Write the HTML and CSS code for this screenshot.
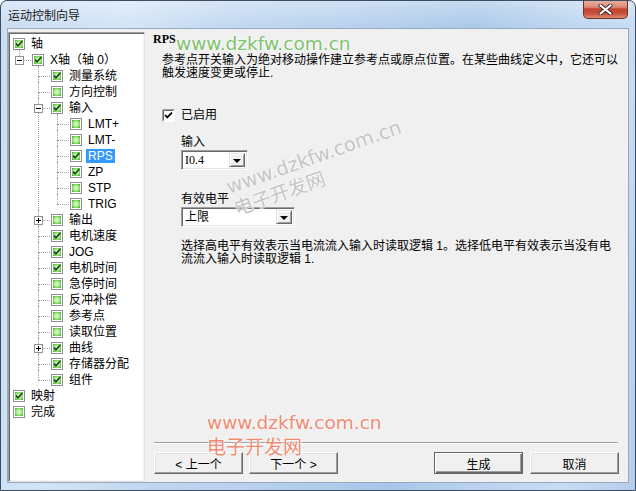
FILE: index.html
```html
<!DOCTYPE html>
<html lang="zh">
<head>
<meta charset="utf-8">
<title>运动控制向导</title>
<link rel="stylesheet" href="styles.css">
</head>
<body>
<div class="window">
  <div class="titlebar">
    <div class="title">运动控制向导</div>
    <div class="close">
      <svg width="15" height="11" viewBox="0 0 15 11"><path d="M2.5 1.5 L12.5 9.5 M12.5 1.5 L2.5 9.5" stroke="#3a2a2a" stroke-width="4" stroke-linecap="round"/><path d="M2.5 1.5 L12.5 9.5 M12.5 1.5 L2.5 9.5" stroke="#fff" stroke-width="2.2" stroke-linecap="round"/></svg>
    </div>
  </div>
  <div class="client">
    <div class="tree">
      <ul class="tv root">
        <li>
          <div class="row"><svg class="cb"><use href="#on"/></svg><span class="lbl">轴</span></div>
          <ul class="tv">
            <li class="last">
              <div class="row"><svg class="exp"><use href="#minus"/></svg><svg class="cb"><use href="#on"/></svg><span class="lbl">X轴（轴 0）</span></div>
              <ul class="tv">
                <li><div class="row"><svg class="cb"><use href="#on"/></svg><span class="lbl">测量系统</span></div></li>
                <li><div class="row"><svg class="cb"><use href="#off"/></svg><span class="lbl">方向控制</span></div></li>
                <li>
                  <div class="row"><svg class="exp"><use href="#minus"/></svg><svg class="cb"><use href="#on"/></svg><span class="lbl">输入</span></div>
                  <ul class="tv">
                    <li><div class="row"><svg class="cb"><use href="#off"/></svg><span class="lbl">LMT+</span></div></li>
                    <li><div class="row"><svg class="cb"><use href="#off"/></svg><span class="lbl">LMT-</span></div></li>
                    <li><div class="row"><svg class="cb"><use href="#on"/></svg><span class="lbl sel">RPS</span></div></li>
                    <li><div class="row"><svg class="cb"><use href="#on"/></svg><span class="lbl">ZP</span></div></li>
                    <li><div class="row"><svg class="cb"><use href="#off"/></svg><span class="lbl">STP</span></div></li>
                    <li class="last"><div class="row"><svg class="cb"><use href="#off"/></svg><span class="lbl">TRIG</span></div></li>
                  </ul>
                </li>
                <li><div class="row"><svg class="exp"><use href="#plus"/></svg><svg class="cb"><use href="#off"/></svg><span class="lbl">输出</span></div></li>
                <li><div class="row"><svg class="cb"><use href="#on"/></svg><span class="lbl">电机速度</span></div></li>
                <li><div class="row"><svg class="cb"><use href="#on"/></svg><span class="lbl">JOG</span></div></li>
                <li><div class="row"><svg class="cb"><use href="#on"/></svg><span class="lbl">电机时间</span></div></li>
                <li><div class="row"><svg class="cb"><use href="#off"/></svg><span class="lbl">急停时间</span></div></li>
                <li><div class="row"><svg class="cb"><use href="#off"/></svg><span class="lbl">反冲补偿</span></div></li>
                <li><div class="row"><svg class="cb"><use href="#off"/></svg><span class="lbl">参考点</span></div></li>
                <li><div class="row"><svg class="cb"><use href="#off"/></svg><span class="lbl">读取位置</span></div></li>
                <li><div class="row"><svg class="exp"><use href="#plus"/></svg><svg class="cb"><use href="#on"/></svg><span class="lbl">曲线</span></div></li>
                <li><div class="row"><svg class="cb"><use href="#on"/></svg><span class="lbl">存储器分配</span></div></li>
                <li class="last"><div class="row"><svg class="cb"><use href="#on"/></svg><span class="lbl">组件</span></div></li>
              </ul>
            </li>
          </ul>
        </li>
        <li><div class="row"><svg class="cb"><use href="#on"/></svg><span class="lbl">映射</span></div></li>
        <li><div class="row"><svg class="cb"><use href="#off"/></svg><span class="lbl">完成</span></div></li>
      </ul>
    </div>
    <div class="pane">
      <div class="heading">RPS</div>
      <div class="desc">参考点开关输入为绝对移动操作建立参考点或原点位置。在某些曲线定义中，它还可以<br>触发速度变更或停止.</div>
      <div class="check-row">
        <svg class="chk" width="13" height="13" viewBox="0 0 13 13"><rect x="0" y="0" width="13" height="13" fill="#fff"/><path d="M0.5 12.5V0.5H12.5" fill="none" stroke="#a0a0a0"/><path d="M1.5 11.5V1.5H11.5" fill="none" stroke="#696969"/><path d="M3 6 L5.2 8.4 L10 3.6" fill="none" stroke="#000" stroke-width="1.8"/></svg>
        <span>已启用</span>
      </div>
      <div class="options">
        <div class="label">输入</div>
        <div class="combo combo-short"><span class="combo-text serif">I0.4</span><span class="drop"><span class="tri"></span></span></div>
        <div class="label label-gap">有效电平</div>
        <div class="combo combo-long"><span class="combo-text">上限</span><span class="drop"><span class="tri"></span></span></div>
        <div class="note">选择高电平有效表示当电流流入输入时读取逻辑 1。选择低电平有效表示当没有电<br>流流入输入时读取逻辑 1.</div>
      </div>
      <div class="spacer"></div>
      <div class="sep"></div>
      <div class="buttons">
        <button class="btn">&lt; 上一个</button>
        <button class="btn">下一个 &gt;</button>
        <div class="spacer"></div>
        <button class="btn def">生成</button>
        <button class="btn">取消</button>
      </div>
    </div>
  </div>
  <div class="wm wm-green">www.dzkfw.com.cn</div>
  <div class="wm wm-gray"><div class="wm-l1 wm-l1g">www.dzkfw.com.cn</div><div class="wm-l2">电子开发网</div></div>
  <div class="wm wm-orange"><div class="wm-l1">www.dzkfw.com.cn</div><div class="wm-l2 wm-l2o">电子开发网</div></div>
</div>
<svg class="defs" width="0" height="0">
  <defs>
    <radialGradient id="gr" cx="50%" cy="50%" r="65%">
      <stop offset="0" stop-color="#e4fad6"/>
      <stop offset="0.55" stop-color="#a3e685"/>
      <stop offset="1" stop-color="#3db52a"/>
    </radialGradient>
    <symbol id="off" viewBox="0 0 12 12"><rect x="0.5" y="0.5" width="11" height="11" fill="#fff" stroke="#8e8f8f"/><rect x="2" y="2" width="8" height="8" fill="url(#gr)"/></symbol>
    <symbol id="on" viewBox="0 0 12 12"><rect x="0.5" y="0.5" width="11" height="11" fill="#fff" stroke="#8e8f8f"/><rect x="2" y="2" width="8" height="8" fill="url(#gr)"/><path d="M3 5.6 L5 7.8 L9.2 3.2" fill="none" stroke="#1f3d1a" stroke-width="1.6"/></symbol>
    <symbol id="minus" viewBox="0 0 9 9"><rect x="0.5" y="0.5" width="8" height="8" fill="#fff" stroke="#919191"/><path d="M2 4.5H7" stroke="#000"/></symbol>
    <symbol id="plus" viewBox="0 0 9 9"><rect x="0.5" y="0.5" width="8" height="8" fill="#fff" stroke="#919191"/><path d="M2 4.5H7M4.5 2V7" stroke="#000"/></symbol>
  </defs>
</svg>
</body>
</html>
```
FILE: styles.css
```css
html, body {
  margin: 0;
  padding: 0;
}
body {
  width: 636px;
  height: 491px;
  overflow: hidden;
  font-family: "Liberation Sans", "Noto Sans CJK SC", sans-serif;
  font-size: 12px;
  color: #000;
  background: #fff;
}
.window {
  position: relative;
  width: 636px;
  height: 491px;
  box-sizing: border-box;
  border: 1px solid #3d4c5e;
  border-radius: 7px 7px 0 0;
  overflow: hidden;
  display: flex;
  flex-direction: column;
  background:
    linear-gradient(180deg, rgba(255,255,255,0.35) 0px, rgba(255,255,255,0.05) 24px, rgba(255,255,255,0) 60px),
    linear-gradient(100deg, #c8dcf2 0%, #d2e4f6 18%, #c0d7f0 32%, #b6d0ee 48%, #a8c7e9 66%, #bcd5f0 80%, #c7dcf3 90%, #b3ceec 100%);
}
.titlebar {
  height: 27px;
  flex: none;
  display: flex;
  align-items: flex-start;
}
.title {
  padding: 8px 0 0 7px;
  line-height: 14px;
  font-size: 12px;
  color: #1a1a1a;
}
.close {
  margin-left: auto;
  margin-right: 7px;
  margin-top: -1px;
  width: 45px;
  height: 19px;
  box-sizing: border-box;
  border: 1px solid #6e3128;
  border-top: none;
  border-radius: 0 0 5px 5px;
  background: linear-gradient(180deg, #eab1a3 0%, #de8a76 40%, #c3432e 50%, #c9503b 75%, #e08b72 100%);
  display: flex;
  align-items: center;
  justify-content: center;
}
.client {
  flex: 1;
  display: flex;
  margin: 0 6px 7px 6px;
  border: 1px solid #97a9be;
  background: #f0f0f0;
  padding-top: 3px;
  min-height: 0;
}
.tree {
  width: 137px;
  flex: none;
  box-sizing: border-box;
  background: #fff;
  border: 1px solid;
  border-color: #a0a0a0 #e3e3e3 #e3e3e3 #a0a0a0;
  box-shadow: inset 1px 1px #696969, inset -1px -1px #f4f4f4;
  padding: 3px 0 0 1px;
  overflow: hidden;
}
.tv {
  list-style: none;
  margin: 0;
  padding: 0 0 0 19px;
}
.tv.root {
  padding-left: 0;
}
.tv li {
  position: relative;
}
.tv .tv > li::before {
  content: "";
  position: absolute;
  left: -10px;
  top: 8px;
  width: 12px;
  border-top: 1px dotted #a0a0a0;
}
.tv .tv > li::after {
  content: "";
  position: absolute;
  left: -10px;
  top: -2px;
  bottom: 0;
  border-left: 1px dotted #a0a0a0;
}
.tv .tv > li.last::after {
  bottom: auto;
  height: 10px;
}
.row {
  position: relative;
  z-index: 1;
  display: flex;
  align-items: center;
  height: 16px;
  padding-left: 3px;
}
.cb {
  width: 12px;
  height: 12px;
  flex: none;
}
.exp {
  position: absolute;
  left: -14px;
  top: 4px;
  width: 9px;
  height: 9px;
}
.lbl {
  margin-left: 4px;
  padding: 0 2px;
  line-height: 14px;
  white-space: nowrap;
}
.lbl.sel {
  background: #3399ff;
  color: #fff;
}
.pane {
  flex: 1;
  display: flex;
  flex-direction: column;
  padding: 0 0 8px 8px;
  min-width: 0;
}
.heading {
  font-family: "Liberation Serif", serif;
  font-weight: bold;
  font-size: 12px;
  line-height: 14px;
}
.desc {
  margin: 8px 0 0 9px;
  line-height: 13px;
  white-space: nowrap;
}
.check-row {
  margin: 28px 0 0 9px;
  height: 14px;
  display: flex;
  align-items: center;
}
.chk {
  flex: none;
}
.check-row span {
  margin-left: 6px;
  line-height: 14px;
}
.options {
  margin-left: 28px;
  display: flex;
  flex-direction: column;
  align-items: flex-start;
}
.label {
  margin-top: 13px;
  line-height: 14px;
}
.label-gap {
  margin-top: 22px;
}
.combo {
  margin-top: 1px;
  height: 20px;
  box-sizing: border-box;
  display: flex;
  align-items: stretch;
  background: #fff;
  border: 1px solid;
  border-color: #a0a0a0 #fff #fff #a0a0a0;
  box-shadow: inset 1px 1px #696969, inset -1px -1px #e3e3e3;
  padding: 2px;
}
.combo-short {
  width: 67px;
}
.combo-long {
  width: 114px;
}
.combo-text {
  flex: 1;
  padding-left: 1px;
  line-height: 14px;
}
.serif {
  font-family: "Liberation Serif", serif;
}
.drop {
  width: 16px;
  flex: none;
  box-sizing: border-box;
  background: #f0f0f0;
  border: 1px solid;
  border-color: #e3e3e3 #696969 #696969 #e3e3e3;
  box-shadow: inset 1px 1px #fff, inset -1px -1px #a0a0a0;
  display: flex;
  align-items: center;
  justify-content: center;
}
.tri {
  width: 0;
  height: 0;
  border-left: 4px solid transparent;
  border-right: 4px solid transparent;
  border-top: 4px solid #000;
  margin-top: 1px;
}
.note {
  margin-top: 13px;
  line-height: 13px;
  white-space: nowrap;
}
.spacer {
  flex: 1;
}
.sep {
  margin: 0 10px 0 1px;
  border-top: 1px solid #a0a0a0;
  border-bottom: 1px solid #fff;
}
.buttons {
  margin: 8px 9px 0 1px;
  display: flex;
  gap: 6px;
}
.btn {
  width: 89px;
  height: 22px;
  box-sizing: border-box;
  margin: 0;
  padding: 0;
  font-family: "Liberation Sans", "Noto Sans CJK SC", sans-serif;
  font-size: 12px;
  color: #000;
  background: #f0f0f0;
  border: 1px solid;
  border-color: #fff #696969 #696969 #fff;
  box-shadow: inset -1px -1px #a0a0a0, inset 1px 1px #e3e3e3;
}
.btn.def {
  border: 1px solid #646464;
  box-shadow: inset 1px 1px #fff, inset -1px -1px #696969, inset -2px -2px #a0a0a0;
  margin-right: 1px;
}
.wm {
  position: absolute;
  z-index: 5;
  white-space: nowrap;
  pointer-events: none;
}
.wm-l1, .wm-green {
  font-family: "DejaVu Sans", sans-serif;
  font-size: 18.5px;
  line-height: 20px;
}
.wm-l1g {
  font-size: 19.5px;
  line-height: 20px;
}
.wm-l2 {
  font-family: "Noto Sans CJK SC", sans-serif;
  font-size: 19px;
  line-height: 22px;
}
.wm-green {
  left: 175px;
  top: 33px;
  color: #7fc26f;
  text-shadow: 0 0 2px #fff, 0 0 2px #fff;
}
.wm-gray {
  left: 223px;
  top: 178px;
  color: #c4c4c4;
  transform: rotate(-19.5deg);
  transform-origin: 0 0;
  text-shadow: 0 0 2px #fff, 0 0 1px #fff;
}
.wm-orange {
  left: 206px;
  top: 412px;
  color: #f08a72;
  text-shadow: 0 0 2px #fff, 0 0 2px #fff;
}
.wm-l2o {
  margin-top: 2px;
}
.defs {
  position: absolute;
  width: 0;
  height: 0;
  overflow: hidden;
}
```
